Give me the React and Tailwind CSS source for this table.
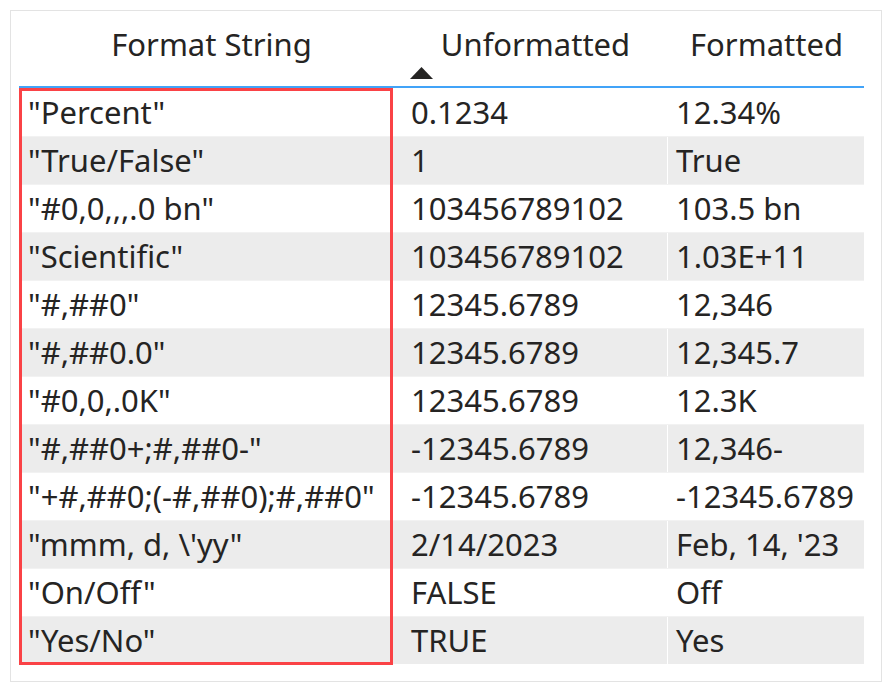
import React from 'react';

const rows = [
  ['"Percent"', '0.1234', '12.34%'],
  ['"True/False"', '1', 'True'],
  ['"#0,0,,,.0 bn"', '103456789102', '103.5 bn'],
  ['"Scientific"', '103456789102', '1.03E+11'],
  ['"#,##0"', '12345.6789', '12,346'],
  ['"#,##0.0"', '12345.6789', '12,345.7'],
  ['"#0,0,.0K"', '12345.6789', '12.3K'],
  ['"#,##0+;#,##0-"', '-12345.6789', '12,346-'],
  ['"+#,##0;(-#,##0);#,##0"', '-12345.6789', '-12345.6789'],
  ['"mmm, d, \\\'yy"', '2/14/2023', "Feb, 14, '23"],
  ['"On/Off"', 'FALSE', 'Off'],
  ['"Yes/No"', 'TRUE', 'Yes'],
];

export default function App() {
  return (
    <div className="w-[890px] h-[690px] bg-white p-[10px] text-[#252423]" style={{ fontFamily: '"Noto Sans", "Open Sans", sans-serif' }}>
      <div className="w-[872px] h-[672px] border border-[#e3e3e3] pl-[8px] pr-[17px]">
        {/* Header */}
        <div className="flex h-[75px] text-[31px] leading-none">
          <div className="w-[373px] flex items-center justify-center pl-[12px] pb-[9px]">Format String</div>
          <div className="w-[275px] relative flex items-center justify-center pl-[12px] pb-[9px]">
            Unformatted
            <svg className="absolute left-[18px] top-[56px]" width="23" height="12" viewBox="0 0 23 12">
              <path d="M11.5 0 L23 12 L0 12 Z" fill="#252423" />
            </svg>
          </div>
          <div className="flex-1 flex items-center justify-center pl-[2px] pb-[9px]">Formatted</div>
        </div>
        <div className="h-[2px] bg-[#41a3f8]" />

        {/* Body */}
        <div className="relative">
          {rows.map((r, i) => (
            <div
              key={i}
              className={`flex h-[48px] text-[31px] leading-none ${i % 2 === 1 ? 'bg-[#ececec]' : 'bg-white'} ${i > 0 ? 'border-t border-[#f2f2f2]' : ''}`}
            >
              <div className="w-[373px] flex items-center pl-[9px] whitespace-nowrap">{r[0]}</div>
              <div className="w-[275px] flex items-center pl-[18px] border-l border-white whitespace-nowrap">{r[1]}</div>
              <div className="flex-1 flex items-center pl-[8px] border-l border-white whitespace-nowrap">{r[2]}</div>
            </div>
          ))}
          <div className="absolute left-0 top-0 w-[374px] bottom-[-1px] border-[3px] border-[#fa4246]" />
        </div>
      </div>
    </div>
  );
}
